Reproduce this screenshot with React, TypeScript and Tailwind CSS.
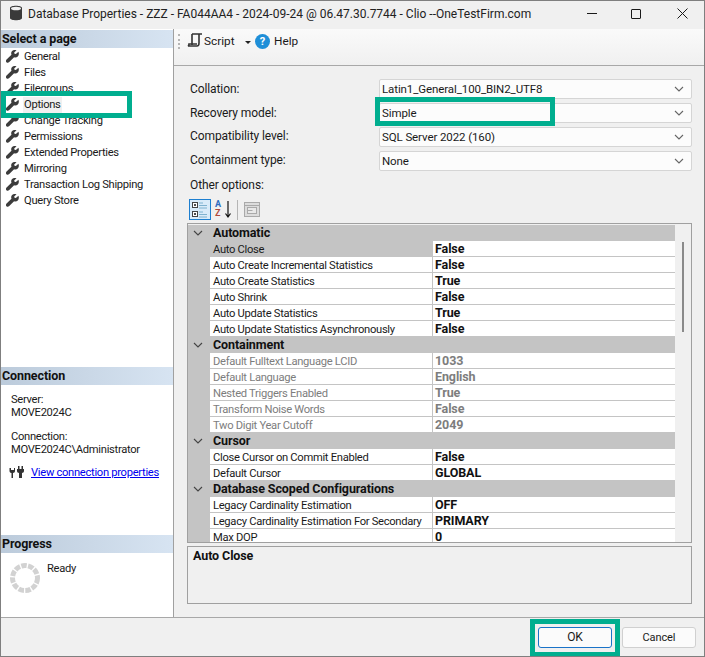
const font = { fontFamily: 'Roboto, "Noto Sans", sans-serif' };
const narrow = "text-[11.200px] tracking-[-0.3px]";

function Wrench() {
  return (
    <svg width="13" height="13" viewBox="0 0 14 14" className="shrink-0 -translate-y-px">
      <path d="M13.400 1.800 10.600 4.400 9.200 4 8.800 2.600 11.400.4C9.600-.5 7.400-.1 6.300 1.400c-.9 1.200-.9 2.700-.4 3.800L.6 10.200c-.9 1-.9 2.200-.1 3s2 .8 3-.2l5.200-5.200c1.200.5 2.900.3 4-.8 1.200-1.200 1.500-3.400.7-5.200Z" fill="#3c3c3c" />
    </svg>
  );
}

function Chevron({ className = "", color = "#666" }: { className?: string; color?: string }) {
  return (
    <svg width="10" height="6" viewBox="0 0 10 6" className={className}>
      <path d="M1 1l4 4 4-4" fill="none" stroke={color} strokeWidth="1.100" />
    </svg>
  );
}

const pages = ["General", "Files", "Filegroups", "Options", "Change Tracking", "Permissions", "Extended Properties", "Mirroring", "Transaction Log Shipping", "Query Store"];

type Row = { n: string; v?: string; dim?: boolean; sel?: boolean };
const rows: Row[] = [
  { n: "Automatic" },
  { n: "Auto Close", v: "False", sel: true },
  { n: "Auto Create Incremental Statistics", v: "False" },
  { n: "Auto Create Statistics", v: "True" },
  { n: "Auto Shrink", v: "False" },
  { n: "Auto Update Statistics", v: "True" },
  { n: "Auto Update Statistics Asynchronously", v: "False" },
  { n: "Containment" },
  { n: "Default Fulltext Language LCID", v: "1033", dim: true },
  { n: "Default Language", v: "English", dim: true },
  { n: "Nested Triggers Enabled", v: "True", dim: true },
  { n: "Transform Noise Words", v: "False", dim: true },
  { n: "Two Digit Year Cutoff", v: "2049", dim: true },
  { n: "Cursor" },
  { n: "Close Cursor on Commit Enabled", v: "False" },
  { n: "Default Cursor", v: "GLOBAL" },
  { n: "Database Scoped Configurations" },
  { n: "Legacy Cardinality Estimation", v: "OFF" },
  { n: "Legacy Cardinality Estimation For Secondary", v: "PRIMARY" },
  { n: "Max DOP", v: "0" },
];

const combos = [
  ["Collation:", "Latin1_General_100_BIN2_UTF8"],
  ["Recovery model:", "Simple"],
  ["Compatibility level:", "SQL Server 2022 (160)"],
  ["Containment type:", "None"],
];

function SectionHead({ title, top }: { title: string; top: number }) {
  return (
    <div
      className="absolute left-0 w-[172px] h-[18px] pl-[1px] bg-gradient-to-r from-[#bccbdb] to-[#d7e4f2] text-[12.500px] tracking-[-0.1px] leading-[18px] font-bold text-[#111]"
      style={{ top }}
    >
      {title}
    </div>
  );
}

export default function App() {
  return (
    <div className="relative w-[705px] h-[657px] overflow-hidden bg-[#f0f0f0] text-[12px] tracking-[-0.1px] text-[#1a1a1a] border border-[#7f7f7f]" style={font}>
      {/* Title bar */}
      <svg width="14" height="16" viewBox="0 0 14 16" className="absolute left-[8px] top-[4px]">
        <path d="M1 3c0-3 12-3 12 0v10c0 3-12 3-12 0Z" fill="#3a3a3a" />
        <ellipse cx="7" cy="3.500" rx="5" ry="1.800" fill="#f0f0f0" />
      </svg>
      <div className="absolute left-[27px] top-[4px] text-[12px] tracking-normal leading-[18px] whitespace-nowrap text-[#222]">
        Database Properties - ZZZ - FA044AA4 - 2024-09-24 @ 06.47.30.7744 - Clio --OneTestFirm.com
      </div>
      <div className="absolute left-[586px] top-[12px] w-[10px] h-px bg-[#1a1a1a]" />
      <div className="absolute left-[630px] top-[8px] w-[10px] h-[10px] border border-[#1a1a1a] rounded-[1px]" />
      <svg width="11" height="11" viewBox="0 0 11 11" className="absolute left-[676px] top-[7px]">
        <path d="M.5.500l10 10M10.500.500l-10 10" stroke="#1a1a1a" strokeWidth="1" />
      </svg>

      {/* Left panel */}
      <div className="absolute left-0 top-[28px] w-[173px] h-[588px] bg-white border-r border-[#a0a0a0]">
        <SectionHead title="Select a page" top={1} />
        <div className={`absolute left-[5px] top-[20px] flex flex-col ${narrow}`}>
          {pages.map((p) => (
            <div key={p} className="flex items-center h-[16px] gap-[4px] whitespace-nowrap">
              <Wrench />
              <span className={`px-[1px] ${p === "Options" ? "bg-[#f0f0f0]" : ""}`}>{p}</span>
            </div>
          ))}
        </div>
        <SectionHead title="Connection" top={338} />
        <div className={`absolute left-[10px] top-[364px] leading-[13px] whitespace-nowrap ${narrow}`}>
          <div>Server:</div>
          <div>MOVE2024C</div>
          <div className="mt-[11px]">Connection:</div>
          <div>MOVE2024C\Administrator</div>
        </div>
        <svg width="16" height="14" viewBox="0 0 16 14" className="absolute left-[8px] top-[437px]">
          <path d="M.5 2v3c0 1 .8 2 2 2v5h1.500V7c1.200 0 2-1 2-2V2H5v2H2V2ZM8 3h7v2c0 1-1 2-2 2v5h-3V7C9 7 8 6 8 5Z" fill="#333" />
          <path d="M9 0h1.500v3H9zM12.500 0H14v3h-1.500z" fill="#333" />
        </svg>
        <div className={`absolute left-[30px] top-[436px] text-[#0000ee] underline whitespace-nowrap ${narrow}`}>View connection properties</div>
        <SectionHead title="Progress" top={506} />
        <svg width="32" height="32" viewBox="0 0 32 32" className="absolute left-[8px] top-[533px]">
          <circle cx="16" cy="16" r="12.500" fill="none" stroke="#d2d2d2" strokeWidth="5" strokeDasharray="5.500 1.350" />
        </svg>
        <div className={`absolute left-[46px] top-[532px] leading-[16px] ${narrow}`}>Ready</div>
      </div>

      {/* Toolbar */}
      <div className="absolute left-[173px] top-[28px] w-[531px] h-[37px] bg-gradient-to-b from-[#fafafa] to-[#f0f0f0] border-b border-[#a8a8a8]" />
      <div className="absolute left-[177px] top-[33px] w-[2px] h-[15px] border-l-2 border-dotted border-[#b5b5b5]" />
      <svg width="16" height="15" viewBox="0 0 16 15" className="absolute left-[186px] top-[32px]">
        <path d="M5 1h10M5 1v11M12 1v9c0 2-1 3-2 3H1c1-.5 1-1.500 1-2h8" fill="none" stroke="#333" strokeWidth="1.600" />
      </svg>
      <div className="absolute left-[203px] top-[31px] text-[11.800px] tracking-normal leading-[18px]">Script</div>
      <div className="absolute left-[244px] top-[40px] border-x-[3px] border-t-[3px] border-x-transparent border-t-[#222]" />
      <div className="absolute left-[254px] top-[33px] w-[15px] h-[15px] rounded-full bg-[#1f8fd8] text-white font-bold text-[11px] leading-[15px] text-center">?</div>
      <div className="absolute left-[273px] top-[31px] text-[11.800px] tracking-normal leading-[18px]">Help</div>

      {/* Combos */}
      {combos.map(([l, v], i) => (
        <div key={l}>
          <div className="absolute left-[189px] leading-[16px] whitespace-nowrap" style={{ top: 80 + i * 23.700 }}>{l}</div>
          <div
            className="absolute left-[378px] w-[313px] h-[20px] flex items-center justify-between pl-[2px] pr-[7px] text-[11.500px] bg-[#fcfcfc] border border-[#d5d5d5] rounded-[2px]"
            style={{ top: 78 + i * 24 }}
          >
            <span className="pt-[2px]">{v}</span>
            <Chevron />
          </div>
        </div>
      ))}
      <div className="absolute left-[189px] top-[176px] leading-[16px]">Other options:</div>

      {/* Property grid toolbar */}
      <div className="absolute left-[188px] top-[198px] w-[22px] h-[21px] bg-[#d9ebf9] border border-[#1d7fd0]">
        <svg width="20" height="19" viewBox="0 0 20 19" className="absolute left-0 top-0">
          <rect x="2.500" y="2.500" width="5" height="5" fill="#fff" stroke="#444" />
          <rect x="2.500" y="11.500" width="5" height="5" fill="#fff" stroke="#444" />
          <path d="M4 5h2M5 4v2M4 14h2M5 13v2" stroke="#111" />
          <path d="M9 3h4M9 5.500h8M9 8h8M9 12h4M9 14.500h8M9 17h8" stroke="#7fb2cf" />
        </svg>
      </div>
      <div className="absolute left-[214px] top-[199px] w-[8px] text-[9px] leading-[9px] font-bold">
        <div className="text-[#2d6cc0]">A</div>
        <div className="text-[#b0483a]">Z</div>
      </div>
      <svg width="6" height="18" viewBox="0 0 6 18" className="absolute left-[224px] top-[200px]">
        <path d="M3 0v15M.5 12.500 3 16l2.500-3.500" fill="none" stroke="#111" strokeWidth="1.200" />
      </svg>
      <div className="absolute left-[236px] top-[199px] w-px h-[20px] bg-[#b5b5b5]" />
      <svg width="16" height="15" viewBox="0 0 16 15" className="absolute left-[243px] top-[201px]">
        <rect x=".5" y=".5" width="15" height="14" fill="#dcdcdc" stroke="#a9a9a9" />
        <path d="M1 3.500h14" stroke="#a9a9a9" />
        <rect x="3.500" y="5.500" width="9" height="6" fill="#e8e8e8" stroke="#a9a9a9" />
        <path d="M3.500 8.500h5" stroke="#a9a9a9" />
      </svg>

      {/* Property grid */}
      <div className="absolute left-[186px] top-[222px] w-[505px] h-[320px] overflow-hidden border border-[#a0a0a0] bg-[#f0f0f0]">
        <div className="absolute left-0 top-[1px] w-[487px]">
          {rows.map((r) => {
            if (r.v === undefined) {
              return (
                <div key={r.n} className="relative h-[16px] bg-[#c4c4c4] font-bold text-[12.500px] leading-[16px] pl-[25px] text-[#111] whitespace-nowrap">
                  <Chevron className="absolute left-[5px] top-[5px]" color="#444" />
                  {r.n}
                </div>
              );
            }
            return (
              <div key={r.n} className="flex h-[16px] bg-[#c4c4c4] whitespace-nowrap">
                <div className="w-[22px] shrink-0" />
                <div className={`w-[222px] shrink-0 h-[15px] pl-[3px] leading-[17px] ${narrow} ${r.sel ? "" : "bg-white"} ${r.dim ? "text-[#7d7d7d]" : ""}`}>{r.n}</div>
                <div className={`flex-1 h-[15px] ml-px pl-[2px] leading-[15px] bg-white font-bold text-[12.500px] ${r.dim ? "text-[#7d7d7d]" : "text-[#111]"}`}>{r.v}</div>
              </div>
            );
          })}
        </div>
        <div className="absolute right-[7px] top-[18px] w-[2px] h-[90px] bg-[#8a8a8a]" />
      </div>

      {/* Description */}
      <div className="absolute left-[186px] top-[545px] w-[505px] h-[58px] border border-[#a0a0a0] pl-[5px] pt-[1px] font-bold text-[12.500px] text-[#111] leading-[16px]">Auto Close</div>

      {/* Footer */}
      <div className="absolute left-0 top-[616px] w-[704px] h-px bg-[#a8a8a8]" />
      <div className="absolute left-[537px] top-[626px] w-[74px] h-[21px] bg-[#fbfbfb] border border-[#1a73c8] rounded-[3px] text-center leading-[19px]">OK</div>
      <div className="absolute left-[621px] top-[626px] w-[74px] h-[21px] bg-[#fbfbfb] border border-[#d0d0d0] rounded-[3px] text-center text-[11px] leading-[19px]">Cancel</div>

      {/* Callouts */}
      <div className="absolute left-0 top-[90px] w-[131px] h-[27px] border-[5px] border-[#00ae8f]" />
      <div className="absolute left-[374px] top-[96px] w-[180px] h-[29px] border-[5px] border-[#00ae8f]" />
      <div className="absolute left-[529px] top-[618px] w-[90px] h-[38px] border-[5px] border-[#00ae8f]" />
    </div>
  );
}
